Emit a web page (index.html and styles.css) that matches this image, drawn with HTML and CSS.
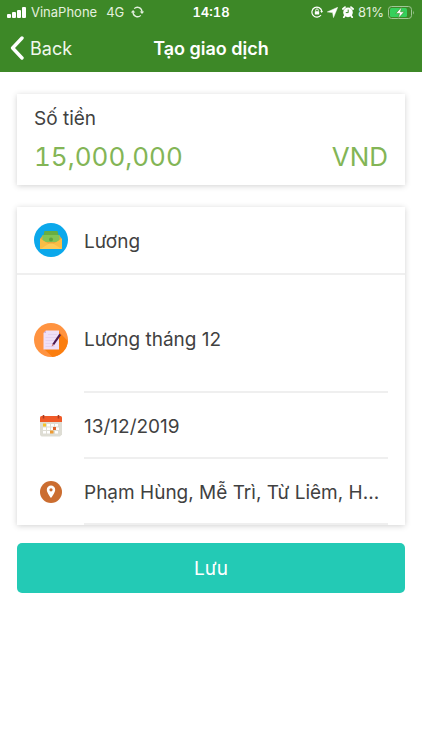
FILE: index.html
```html
<!DOCTYPE html>
<html lang="vi">
<head>
<meta charset="utf-8">
<meta name="viewport" content="width=device-width, initial-scale=1">
<title>Tạo giao dịch</title>
<link rel="stylesheet" href="styles.css">
</head>
<body>
<header class="top">
  <div class="status">
    <div class="status-side">
      <svg width="19" height="11" viewBox="0 0 19 11" fill="#fff" aria-hidden="true"><rect x="0" y="7" width="4" height="4" rx="1"/><rect x="5" y="5" width="4" height="6" rx="1"/><rect x="10" y="3" width="4" height="8" rx="1"/><rect x="15" y="0" width="4" height="11" rx="1"/></svg>
      <span class="carrier">VinaPhone</span>
      <span class="network">4G</span>
      <svg width="13" height="12" viewBox="0 0 13 12" fill="none" stroke="#e4f0df" stroke-width="1.3" aria-hidden="true"><path d="M3.2 2.6A4.6 4.6 0 0 1 11 6M9.8 9.4A4.6 4.6 0 0 1 2 6"/><path d="M8.7 5.6h4.4L11 8zM-.1 6.4h4.4L2.1 4z" fill="#e4f0df" stroke="none"/></svg>
    </div>
    <span class="clock">14:18</span>
    <div class="status-side status-right">
      <svg width="12" height="12" viewBox="0 0 12 12" fill="none" stroke="#fff" aria-hidden="true"><path d="M10.8 5A5 5 0 1 0 10 9" stroke-width="1.2"/><path d="M9.2 5h2.8L10.7 7z" fill="#fff" stroke="none"/><rect x="3.8" y="5.2" width="4.4" height="3.4" rx=".5" fill="#fff" stroke="none"/><path d="M4.7 5.4V4.2a1.3 1.3 0 0 1 2.6 0v1.2" stroke-width=".9"/></svg>
      <svg width="11" height="11" viewBox="0 0 11 11" fill="#fff" aria-hidden="true"><path d="M10.700.300 6.500 10.600 5.600 5.600.300 4.900z" stroke="#fff" stroke-width=".5"/></svg>
      <svg width="12" height="12" viewBox="0 0 12 12" aria-hidden="true"><circle cx="6" cy="6.4" r="4.8" fill="#fff"/><path d="M.9 3 3 1.1M11.1 3 9 1.1M2.8 9.8l-1 1.4M9.200 9.800l1 1.400" stroke="#fff" stroke-width="1.8" stroke-linecap="round"/><path d="M6.200 3.600v3H3.800" fill="none" stroke="#3d8827"/></svg>
      <span class="charge">81%</span>
      <svg width="27" height="13" viewBox="0 0 27 13" aria-hidden="true"><rect x=".5" y=".5" width="23" height="12" rx="3" fill="none" stroke="#a1c797"/><rect x="2" y="2" width="17" height="9" rx="1.5" fill="#35d05c"/><path d="M25 4.500q1.500 2 0 4z" fill="#a1c797"/><path d="M13.600 1 7.800 7.400h3.700l-1.100 4.900 5.900-6.500h-3.700z" fill="#fff" stroke="#3d8827" stroke-width=".6"/></svg>
    </div>
  </div>
  <nav class="nav">
    <a class="back" href="#"><svg width="14" height="24" viewBox="0 0 14 24" fill="none" stroke="#fff" stroke-width="3.4" stroke-linecap="round" stroke-linejoin="round" aria-hidden="true"><path d="M12 2 2.600 12 12 22"/></svg>Back</a>
    <h1 class="title">Tạo giao dịch</h1>
  </nav>
</header>
<main>
  <form class="form">
    <section class="card amount">
      <label class="amount-label" for="amount">Số tiền</label>
      <div class="amount-line">
        <input class="amount-input" id="amount" type="text" inputmode="numeric" value="15,000,000">
        <span class="currency">VND</span>
      </div>
    </section>
    <section class="card details">
      <button class="row category" type="button">
        <span class="icon"><svg width="34" height="34" viewBox="0 0 34 34" aria-hidden="true"><circle cx="17" cy="17" r="17" fill="#0ba8eb"/><path d="M6 16 9 12h16l3 4v10H6z" fill="#e9a83c"/><path d="M10.500 8h13l1 4.500h-15z" fill="#68ae42"/><path d="M8.500 12h17v7h-17z" fill="#83c455"/><circle cx="17" cy="16.500" r="2" fill="#5fa540"/><path d="M6 15.500 15 21h4l9-5.500V26H6z" fill="#f9bd45"/><path d="M6.500 26 15 20.500h4l8.500 5.500z" fill="#fccb58"/></svg></span>
        <span class="value">Lương</span>
      </button>
      <label class="row note">
        <span class="icon"><svg width="34" height="34" viewBox="0 0 34 34" role="img" aria-label="Ghi chú"><circle cx="17" cy="17" r="17" fill="#ff9340"/><path d="M25 9 33.800 18A17 17 0 0 1 18.500 33.900L10 26z" fill="#fb7e0e"/><path d="M12 7.500h13v19H9.500V10z" fill="#efe0f7"/><path d="M12 7.500V10H9.500z" fill="#cfb5df"/><path d="M14 11.500h9M11.500 14.500H23M11.500 17.500H23M11.500 20.500h8M11.500 23.500h9" stroke="#dfcdeb" stroke-width=".7"/><path d="m26.200 11.300-7 10.200" stroke="#4d1a50" stroke-width="2.200"/><path d="m18.300 20.900 1.800 1.200-2.500 1.300z" fill="#c9716b"/></svg></span>
        <input class="value" type="text" value="Lương tháng 12">
      </label>
      <label class="row">
        <span class="icon"><svg width="22" height="22" viewBox="0 0 22 22" role="img" aria-label="Ngày"><path d="M0 7h22v12.500l-2 2H1.500L0 20z" fill="#deddd4"/><path d="M0 2.500Q0 1 1.500 1h19Q22 1 22 2.500V7H0z" fill="#f05a28"/><path d="M3.500 0v3.500M18.500 0v3.500" stroke="#a93c22" stroke-width="1.600"/><path d="M7 9h3v2.500H7zm4 0h3v2.500h-3zm4 0h3v2.500h-3zM3 12.500h3V15H3zm4 0h3V15H7zm4 0h3V15h-3zm5 0h3V15h-3zM3 16h3v2.500H3zm4 0h3v2.500H7zm8 0h3v2.500h-3z" fill="#fff"/><path d="M3 8.500h3v3H3z" fill="#f4c430"/><path d="M13 12h3v3h-3z" fill="#dc642d"/><path d="M10 15.500h3.500v3H10z" fill="#ee9b32"/></svg></span>
        <input class="value" type="text" value="13/12/2019">
      </label>
      <label class="row">
        <span class="icon"><svg width="22" height="22" viewBox="0 0 22 22" role="img" aria-label="Địa điểm"><circle cx="11" cy="11" r="11" fill="#cb6d30"/><path d="M11 4.500a4.200 4.200 0 0 0-4.200 4.200c0 3 4.200 8.300 4.200 8.300s4.200-5.300 4.200-8.300A4.200 4.200 0 0 0 11 4.500z" fill="#fff"/><circle cx="11" cy="8.800" r="1.600" fill="#cb6d30"/></svg></span>
        <input class="value" type="text" value="Phạm Hùng, Mễ Trì, Từ Liêm, H...">
      </label>
    </section>
    <button class="save" type="submit">Lưu</button>
  </form>
</main>
</body>
</html>
```
FILE: styles.css
```css
* { box-sizing: border-box; }
body {
  margin: 0;
  background: #fff;
  color: #414141;
  font-family: Inter, "Liberation Sans", sans-serif;
  font-size: 19px;
}
svg { display: block; flex: none; }
button, input {
  font: inherit;
  color: inherit;
  background: none;
  border: 0;
  padding: 0;
  margin: 0;
}
.top { background: #3d8827; color: #fff; }
.status {
  display: grid;
  grid-template-columns: 1fr auto 1fr;
  align-items: center;
  height: 24px;
  padding: 0 7px;
  font-size: 13px;
}
.status-side { display: flex; align-items: center; gap: 5px; }
.carrier, .network, .charge { color: #e4f0df; }
.network { margin: 0 2px 0 4px; }
.clock { font-weight: 600; font-variant-numeric: tabular-nums; }
.status-right { justify-content: flex-end; gap: 4px; }
.nav {
  display: grid;
  grid-template-columns: 1fr auto 1fr;
  align-items: center;
  height: 48px;
  padding: 0 10px;
}
.back {
  display: flex;
  align-items: center;
  gap: 6px;
  color: #f0f7ed;
  font-size: 18px;
  text-decoration: none;
}
.title { margin: 0; font-size: 18px; font-weight: 600; }
.form { padding: 22px 17px; }
.card {
  background: #fff;
  box-shadow: 0 1px 6px rgba(0, 0, 0, 0.18);
}
.amount { padding: 13px 17px 8px; margin-bottom: 22px; }
.amount-label { display: block; line-height: 24px; }
.amount-line {
  display: flex;
  align-items: center;
  justify-content: space-between;
  margin-top: 4px;
  height: 42px;
  color: #83b556;
  font-size: 26px;
}
.amount-input {
  flex: 1;
  min-width: 0;
  font-variant-numeric: tabular-nums;
}
.details { margin-bottom: 18px; }
.row {
  display: flex;
  align-items: center;
  gap: 16px;
  width: 100%;
  padding: 0 17px;
  text-align: left;
}
.icon { display: flex; justify-content: center; flex: 0 0 34px; }
.value {
  flex: 1;
  min-width: 0;
  height: 66px;
  padding-top: 2px;
  border-bottom: 2px solid #efefef;
}
.category { height: 68px; border-bottom: 2px solid #efefef; }
.category .value { height: auto; border: 0; }
.note .value { height: 118px; padding-top: 12px; }
.note .icon { padding-top: 12px; }
.save {
  display: block;
  width: 100%;
  height: 50px;
  border-radius: 5px;
  background: #23cab5;
  color: #fff;
}
```
